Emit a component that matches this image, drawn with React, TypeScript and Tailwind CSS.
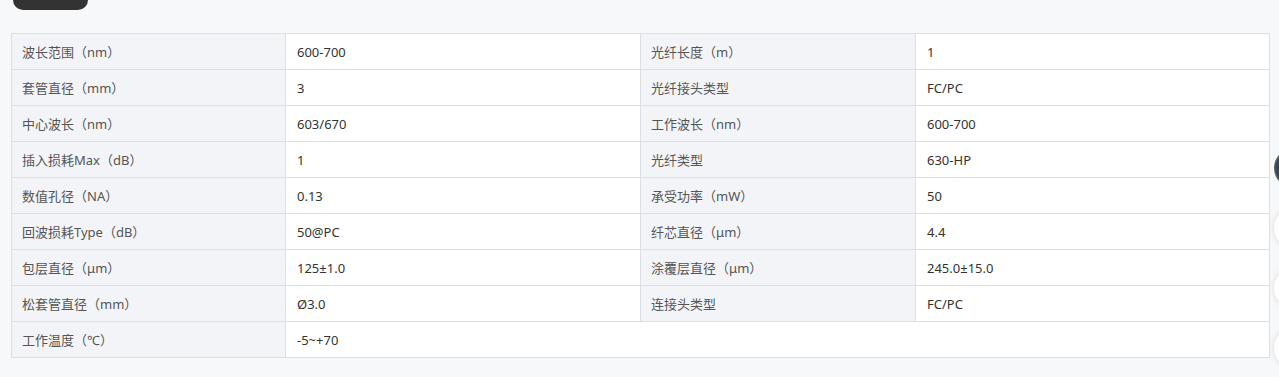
import React from "react";

const rows: [string, string, string?, string?][] = [
  ["波长范围（nm）", "600-700", "光纤长度（m）", "1"],
  ["套管直径（mm）", "3", "光纤接头类型", "FC/PC"],
  ["中心波长（nm）", "603/670", "工作波长（nm）", "600-700"],
  ["插入损耗Max（dB）", "1", "光纤类型", "630-HP"],
  ["数值孔径（NA）", "0.13", "承受功率（mW）", "50"],
  ["回波损耗Type（dB）", "50@PC", "纤芯直径（μm）", "4.4"],
  ["包层直径（μm）", "125±1.0", "涂覆层直径（μm）", "245.0±15.0"],
  ["松套管直径（mm）", "Ø3.0", "连接头类型", "FC/PC"],
  ["工作温度（℃）", "-5~+70"],
];

const labelCls =
  "h-[36px] border border-[#dcdfe3] bg-[#f3f4f7] pl-[10px] pt-[2px] text-left text-[13px] font-normal text-[#555]";
const valueCls =
  "h-[36px] border border-[#dcdfe3] bg-white pl-[11px] pt-[2px] text-left text-[13px] text-[#333]";

export default function App() {
  return (
    <div
      className="relative h-[377px] w-full overflow-hidden bg-[#f7f8fa]"
      style={{ fontFamily: '"Noto Sans", "Noto Sans CJK SC", sans-serif' }}
    >
      {/* dark tab peeking from the top */}
      <div className="ml-[13px] h-[10px] w-[75px] rounded-b-[12px] bg-[#333333]" />

      <div className="mt-[23px] pl-[11px] pr-[9px]">
        <table className="w-full table-fixed border-collapse">
          <colgroup>
            <col className="w-[274px]" />
            <col className="w-[355px]" />
            <col className="w-[275px]" />
            <col />
          </colgroup>
          <tbody>
            {rows.map((r, i) => (
              <tr key={i} className="h-[36px]">
                <th className={labelCls}>{r[0]}</th>
                {r[2] ? (
                  <>
                    <td className={valueCls}>{r[1]}</td>
                    <th className={labelCls}>{r[2]}</th>
                    <td className={valueCls}>{r[3]}</td>
                  </>
                ) : (
                  <td className={valueCls} colSpan={3}>
                    {r[1]}
                  </td>
                )}
              </tr>
            ))}
          </tbody>
        </table>
      </div>

      {/* floating side buttons, mostly off-screen */}
      <div className="absolute left-[1274px] top-[148px] flex flex-col gap-[20px]">
        <div className="h-[40px] w-[40px] rounded-full bg-[radial-gradient(circle_at_40%_50%,#1f2a33_0%,#3b4a55_45%,#cfd5da_80%)]" />
        <div className="h-[40px] w-[40px] rounded-full bg-white shadow-[0_0_6px_rgba(0,0,0,0.12)]" />
        <div className="h-[40px] w-[40px] rounded-full bg-white shadow-[0_0_6px_rgba(0,0,0,0.12)]" />
        <div className="h-[40px] w-[40px] rounded-full bg-white shadow-[0_0_6px_rgba(0,0,0,0.12)]" />
      </div>
    </div>
  );
}
